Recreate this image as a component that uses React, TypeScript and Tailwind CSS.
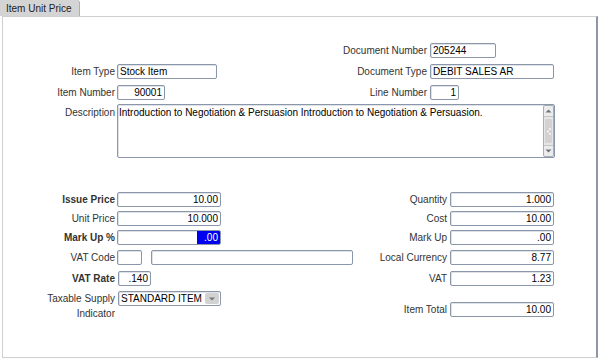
import type { ReactNode } from "react";

const box =
  "h-[15px] border border-[#8a97aa] rounded-[2px] bg-white shadow-[inset_1px_1px_0_#dfe3e8] text-[10px] leading-[13px] text-black px-[2px] overflow-hidden whitespace-nowrap";

function Field({
  w,
  value,
  right,
  className = "",
}: {
  w: string;
  value?: string;
  right?: boolean;
  className?: string;
}) {
  return (
    <div className={`${box} ${w} ${right ? "text-right" : "text-left"} ${className}`}>
      {value}
    </div>
  );
}

function Label({
  w,
  bold,
  children,
}: {
  w: string;
  bold?: boolean;
  children: ReactNode;
}) {
  return (
    <div
      className={`${w} text-right leading-[15px] text-[#333] ${
        bold ? "font-bold text-[#111]" : ""
      }`}
    >
      {children}
    </div>
  );
}

function Row({ children, className = "" }: { children: ReactNode; className?: string }) {
  return <div className={`flex items-center h-[15px] ${className}`}>{children}</div>;
}

function Scrollbar() {
  return (
    <div className="w-[11px] h-full border border-[#a5adbb] rounded-[2px] bg-[#e6e6e6] flex flex-col">
      <div className="h-[11px] flex items-center justify-center border-b border-[#c4c4c4] bg-[#ececec] rounded-t-[2px]">
        <svg width="7" height="4" viewBox="0 0 7 4">
          <path d="M0.5 3.5 L3.5 0.5 L6.5 3.5 Z" fill="#6b7280" />
        </svg>
      </div>
      <div className="flex-1 mx-[1px] my-[2px] bg-[#d2d2d2] rounded-[1px] flex items-center justify-center">
        <svg width="7" height="9" viewBox="0 0 7 9">
          <circle cx="5" cy="2" r="0.9" fill="#fff" />
          <circle cx="3" cy="4.5" r="0.9" fill="#fff" />
          <circle cx="5" cy="7" r="0.9" fill="#fff" />
        </svg>
      </div>
      <div className="h-[11px] flex items-center justify-center border-t border-[#c4c4c4] bg-[#ececec] rounded-b-[2px]">
        <svg width="7" height="4" viewBox="0 0 7 4">
          <path d="M0.5 0.5 L3.5 3.5 L6.5 0.5 Z" fill="#6b7280" />
        </svg>
      </div>
    </div>
  );
}

export default function App() {
  return (
    <div className="w-[600px] h-[360px] bg-white flex flex-col font-['Liberation_Sans',Arial,sans-serif] text-[10px] text-[#333]">
      {/* tab strip */}
      <div className="h-[16px] flex shrink-0">
        <div className="w-[80px] h-[16px] bg-[#d4d4d4] border-r border-[#b0b0b0] rounded-tr-[3px] pl-[6px] leading-[17px] text-[#222] text-[10px]">
          Item Unit Price
        </div>
      </div>

      {/* panel */}
      <div className="ml-[2px] w-[596px] h-[342px] border-t border-l border-b border-[#cfcfcf] border-r-2 border-r-[#8e95a5] pt-[26px]">
        <Row>
          <div className="w-[297px]" />
          <Label w="w-[127px]">Document Number</Label>
          <Field w="w-[66px]" value="205244" className="ml-[3px]" />
        </Row>
        <Row className="mt-[6px]">
          <div className="w-[297px] flex items-center">
            <Label w="w-[112px]">Item Type</Label>
            <Field w="w-[100px]" value="Stock Item" className="ml-[2px]" />
          </div>
          <Label w="w-[127px]">Document Type</Label>
          <Field w="w-[124px]" value="DEBIT SALES AR" className="ml-[3px]" />
        </Row>
        <Row className="mt-[6px]">
          <div className="w-[297px] flex items-center">
            <Label w="w-[112px]">Item Number</Label>
            <Field w="w-[48px]" value="90001" right className="ml-[2px]" />
          </div>
          <Label w="w-[127px]">Line Number</Label>
          <Field w="w-[29px]" value="1" right className="ml-[3px]" />
        </Row>
        <div className="flex mt-[4px]">
          <div className="w-[112px] text-right leading-[15px] pt-[1px]">Description</div>
          <div className="ml-[2px] w-[438px] h-[54px] border border-[#8a97aa] rounded-[2px] shadow-[inset_1px_1px_0_#dfe3e8] flex">
            <div className="flex-1 px-[1px] pt-[1px] leading-[13px] text-black">
              Introduction to Negotiation &amp; Persuasion Introduction to Negotiation &amp; Persuasion.
            </div>
            <Scrollbar />
          </div>
        </div>

        {/* pricing */}
        <div className="flex mt-[34px]">
          <div className="w-[370px] flex flex-col">
            <Row>
              <Label w="w-[112px]" bold>
                Issue Price
              </Label>
              <Field w="w-[104px]" value="10.00" right className="ml-[2px]" />
            </Row>
            <Row className="mt-[4px]">
              <Label w="w-[112px]">Unit Price</Label>
              <Field w="w-[104px]" value="10.000" right className="ml-[2px]" />
            </Row>
            <Row className="mt-[4px]">
              <Label w="w-[112px]" bold>
                Mark Up %
              </Label>
              <div className={`${box} w-[104px] ml-[2px] flex justify-end !px-0`}>
                <span className="w-[23px] h-full bg-[#0000f0] text-white text-right pr-[2px]">.00</span>
              </div>
            </Row>
            <Row className="mt-[5px]">
              <Label w="w-[112px]">VAT Code</Label>
              <Field w="w-[25px]" className="ml-[2px]" />
              <Field w="w-[202px]" className="ml-[9px]" />
            </Row>
            <Row className="mt-[6px]">
              <Label w="w-[112px]" bold>
                VAT Rate
              </Label>
              <Field w="w-[33px]" value=".140" right className="ml-[3px]" />
            </Row>
            <div className="flex mt-[5px]">
              <div className="w-[112px] text-right leading-[15px] pt-[0px]">
                Taxable Supply
                <br />
                Indicator
              </div>
              <div className={`${box} w-[103px] ml-[3px] flex items-center justify-between !pr-[1px]`}>
                <span>STANDARD ITEM</span>
                <span className="w-[14px] h-[11px] bg-[#d2d2d2] rounded-[2px] flex items-center justify-center">
                  <svg width="6" height="4" viewBox="0 0 6 4">
                    <path d="M0 0.5 L6 0.5 L3 3.5 Z" fill="#777" />
                  </svg>
                </span>
              </div>
            </div>
          </div>

          <div className="flex flex-col">
            <Row>
              <Label w="w-[74px]">Quantity</Label>
              <Field w="w-[104px]" value="1.000" right className="ml-[3px]" />
            </Row>
            <Row className="mt-[4px]">
              <Label w="w-[74px]">Cost</Label>
              <Field w="w-[104px]" value="10.00" right className="ml-[3px]" />
            </Row>
            <Row className="mt-[4px]">
              <Label w="w-[74px]">Mark Up</Label>
              <Field w="w-[104px]" value=".00" right className="ml-[3px]" />
            </Row>
            <Row className="mt-[5px]">
              <Label w="w-[74px]">Local Currency</Label>
              <Field w="w-[104px]" value="8.77" right className="ml-[3px]" />
            </Row>
            <Row className="mt-[6px]">
              <Label w="w-[74px]">VAT</Label>
              <Field w="w-[104px]" value="1.23" right className="ml-[3px]" />
            </Row>
            <Row className="mt-[16px]">
              <Label w="w-[74px]">Item Total</Label>
              <Field w="w-[104px]" value="10.00" right className="ml-[3px]" />
            </Row>
          </div>
        </div>
      </div>
    </div>
  );
}
